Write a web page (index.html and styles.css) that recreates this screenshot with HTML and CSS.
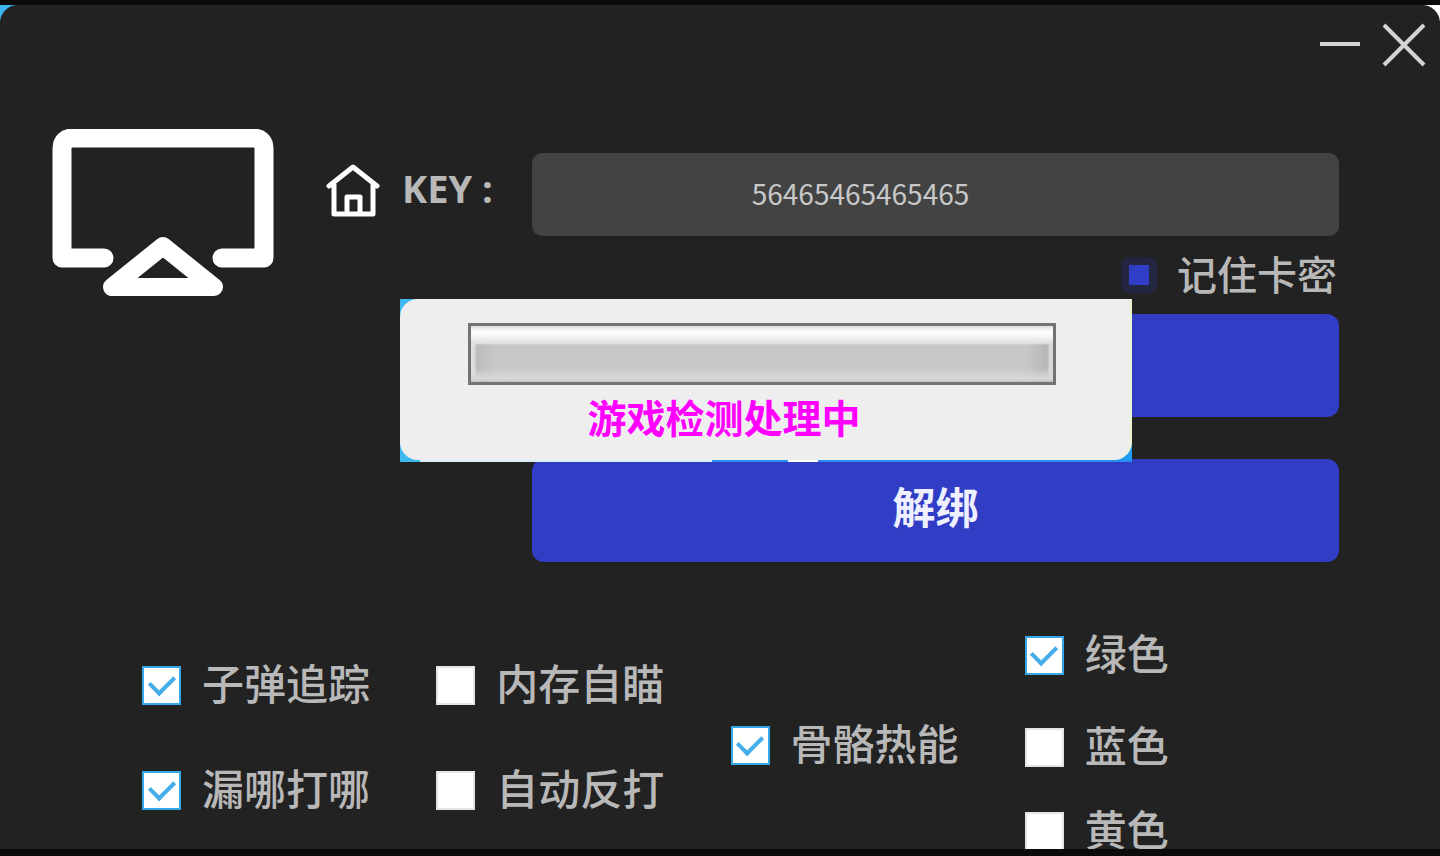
FILE: index.html
```
<!DOCTYPE html>
<html lang="zh-CN">
<head>
    <meta charset="UTF-8">
    <meta name="viewport" content="width=device-width, initial-scale=1.0">
    <title>KEY</title>
    <link rel="stylesheet" href="styles.css">
</head>
<body>
    <div class="backdrop">
        <main class="window">
            <header class="titlebar">
                <button class="win-btn" type="button" aria-label="最小化">
                    <svg width="44" height="44" viewBox="0 0 44 44"><path d="M2 21H42"/></svg>
                </button>
                <button class="win-btn" type="button" aria-label="关闭">
                    <svg width="44" height="44" viewBox="0 0 44 44"><path d="M2 2L42 42M42 2L2 42"/></svg>
                </button>
            </header>

            <section class="login">
                <svg class="logo" width="222" height="168" viewBox="0 0 222 168">
                    <path class="screen" d="M52 129H10V20Q10 9 21 9H201Q212 9 212 20V129H170"/>
                    <path class="stand" d="M111 117L60 158H162Z"/>
                </svg>

                <div class="key-label">
                    <svg class="home" width="56" height="56" viewBox="0 0 56 56">
                        <path d="M3 23L27 4L51 23M8 22V51H47V22M21 51V34H34V51"/>
                    </svg>
                    <label for="key">KEY :</label>
                </div>

                <form class="form">
                    <input class="key-input" id="key" type="text" value="56465465465465">
                    <label class="remember">
                        <input class="remember-box" type="checkbox" checked>
                        <span>记住卡密</span>
                    </label>
                    <button class="btn" type="button" aria-label="登录"></button>
                    <button class="btn" type="button">解绑</button>
                </form>
            </section>

            <section class="options">
                <div class="col col-main">
                    <label class="option"><input class="box" type="checkbox" checked><span>子弹追踪</span></label>
                    <label class="option"><input class="box" type="checkbox"><span>内存自瞄</span></label>
                    <label class="option"><input class="box" type="checkbox" checked><span>漏哪打哪</span></label>
                    <label class="option"><input class="box" type="checkbox"><span>自动反打</span></label>
                </div>
                <div class="col col-heat">
                    <label class="option"><input class="box" type="checkbox" checked><span>骨骼热能</span></label>
                </div>
                <div class="col col-color">
                    <label class="option"><input class="box" type="checkbox" checked><span>绿色</span></label>
                    <label class="option"><input class="box" type="checkbox"><span>蓝色</span></label>
                    <label class="option"><input class="box" type="checkbox"><span>黄色</span></label>
                </div>
            </section>

            <!-- loading popup -->
            <div class="popup" role="dialog" aria-labelledby="popup-text">
                <div class="popup-inner">
                    <progress class="progress" value="0" max="100" aria-labelledby="popup-text"></progress>
                    <p class="popup-text" id="popup-text">游戏检测处理中</p>
                </div>
            </div>
        </main>
    </div>
</body>
</html>
```

FILE: styles.css
```
* {
    box-sizing: border-box;
}
body {
    margin: 0;
    background: #0b0b0b;
    color: #b8b8b8;
    font-family: "Noto Sans CJK SC", sans-serif;
}
button, input {
    font-family: inherit;
}
.backdrop {
    height: 100vh;
    padding: 5px 0 7px;
    background: linear-gradient(90deg, #3db4f0 50%, #ffffff 50%) 0 5px / 100% 16px no-repeat;
}
.window {
    position: relative;
    height: 100%;
    overflow: hidden;
    background: #222222;
    border-radius: 18px 18px 0 0;
}

/* title bar */
.titlebar {
    display: flex;
    justify-content: flex-end;
    gap: 20px;
    height: 124px;
    padding: 18px 14px 0 0;
}
.win-btn {
    width: 44px;
    height: 44px;
    padding: 0;
    border: none;
    background: none;
    cursor: pointer;
}
.win-btn svg {
    display: block;
    fill: none;
    stroke: #d4d4d4;
    stroke-width: 4;
}

/* login */
.login {
    display: flex;
    align-items: flex-start;
    padding: 0 101px 0 52px;
}
.logo {
    flex: none;
    fill: none;
    stroke: #ffffff;
    stroke-linecap: round;
    stroke-linejoin: round;
}
.screen {
    stroke-width: 19;
}
.stand {
    stroke-width: 18;
}
.key-label {
    display: flex;
    flex: none;
    align-items: center;
    gap: 20px;
    width: 206px;
    margin-left: 52px;
    padding-top: 34px;
    font: 700 38px/50px "Open Sans", sans-serif;
}
.key-label label {
    padding-bottom: 6px;
    white-space: nowrap;
}
.home {
    flex: none;
    fill: none;
    stroke: #ffffff;
    stroke-width: 5;
    stroke-linecap: round;
    stroke-linejoin: round;
}
.form {
    display: flex;
    flex: 1;
    flex-direction: column;
    padding-top: 24px;
}
.key-input {
    width: 100%;
    height: 83px;
    padding: 0 150px 4px 0;
    border: none;
    border-radius: 10px;
    background: #434343;
    color: #c8c8c8;
    font-size: 28px;
    text-align: center;
}
.remember {
    display: flex;
    align-items: center;
    align-self: flex-end;
    gap: 20px;
    height: 36px;
    margin: 21px 2px;
    font-size: 40px;
    font-weight: 500;
    line-height: 36px;
}
.remember span {
    padding-bottom: 4px;
}
.remember-box {
    appearance: none;
    width: 36px;
    height: 36px;
    margin: 0;
    border: 8px solid #232640;
    border-radius: 8px;
    background: #222222;
}
.remember-box:checked {
    background: #303dc6;
}
.btn {
    height: 103px;
    padding: 0 0 12px;
    border: none;
    border-radius: 12px;
    background: #303dc4;
    color: #eef0ff;
    font-size: 43px;
    font-weight: 700;
    cursor: pointer;
}
.btn + .btn {
    margin-top: 42px;
}

/* options */
.options {
    display: grid;
    grid-template-columns: 2fr 1fr 1fr;
    padding: 69px 121px 0 142px;
}
.col {
    display: grid;
    align-content: start;
}
.col-main {
    grid-template-columns: 1fr 1fr;
    row-gap: 57px;
    padding-top: 30px;
}
.col-heat {
    padding-top: 90px;
}
.col-color {
    grid-template-rows: 92px 84px 48px;
}
.option {
    display: flex;
    align-items: center;
    gap: 21px;
    height: 48px;
    font-size: 42px;
    font-weight: 500;
    line-height: 42px;
    white-space: nowrap;
}
.option span {
    padding-bottom: 6px;
}
.box {
    display: grid;
    place-items: center;
    appearance: none;
    width: 39px;
    height: 39px;
    margin: 0;
    border: 2px solid #e4e4e4;
    background: #ffffff;
}
.box:checked {
    border-color: #35a7e8;
}
.box:checked::before {
    content: "";
    width: 12px;
    height: 20px;
    border: solid #45aeea;
    border-width: 0 4px 4px 0;
    transform: translateY(-3px) rotate(45deg);
}

/* popup */
.popup {
    position: absolute;
    top: 294px;
    left: 400px;
    width: 732px;
    padding-bottom: 2px;
    background:
        linear-gradient(90deg, #3db9ee 20px, #d9effa 20px 312px, #2a8cf0 312px 388px, #ffffff 388px 418px, #2a8cf0 418px) 0 100% / 100% 2px no-repeat,
        linear-gradient(90deg, #3db9ee 50%, #1f9cf5 50%);
}
.popup-inner {
    display: flex;
    flex-direction: column;
    align-items: center;
    height: 161px;
    padding: 24px 6px 0 0;
    border-right: 2px solid #e9f5cf;
    border-radius: 18px 0 18px 18px;
    background: #eeeeee;
}
.progress {
    appearance: none;
    width: 588px;
    height: 62px;
    border: 3px solid #737373;
}
.progress::-webkit-progress-bar {
    background:
        linear-gradient(#dddddd, #fefefe 10%, #f6f6f6 18%, #dedede 31%, #c8c8c800 34%),
        linear-gradient(#c8c8c800 75%, #d8d8d8 94%, #c2c2c2),
        linear-gradient(90deg, #dedede 3px, #bcbcbc 6px, #c8c8c8 26px, #c8c8c8 calc(100% - 26px), #b6b6b6 calc(100% - 6px), #d8d8d8 calc(100% - 3px));
}
.popup-text {
    margin: 3px 76px 0 0;
    color: #ff00ff;
    font-size: 39px;
    font-weight: 700;
    line-height: 56px;
}
```
